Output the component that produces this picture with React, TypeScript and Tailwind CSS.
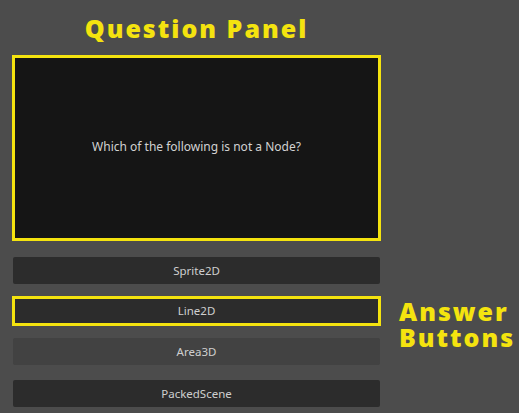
import React from "react";

function Btn({ label, tone }: { label: string; tone: "dark" | "light" }) {
  return (
    <div
      className={`mx-px flex h-[27px] items-center justify-center rounded-[2px] text-[11.5px] text-[#cfcfcf] ${
        tone === "dark" ? "bg-[#2c2c2c]" : "bg-[#424242]"
      }`}
    >
      {label}
    </div>
  );
}

export default function App() {
  return (
    <div
      className="flex h-[413px] w-[519px] bg-[#4c4c4c]"
      style={{ fontFamily: '"Noto Sans", "Open Sans", sans-serif' }}
    >
      <div className="ml-[12px] flex w-[369px] flex-col">
        <div
          className="mt-[16px] h-[25px] text-center text-[25px] font-extrabold leading-[25px] tracking-[2px] text-[#f4e30f]"
          style={{ fontFamily: '"Open Sans", sans-serif' }}
        >
          Question Panel
        </div>
        <div className="mt-[14px] flex h-[186px] items-center justify-center border-[3px] border-[#f4e30f] bg-[#151515] pb-[2px] text-[12px] text-[#d2d2d2]">
          Which of the following is not a Node?
        </div>
        <div className="mt-[16px]">
          <Btn label="Sprite2D" tone="dark" />
        </div>
        <div className="mt-[12px] flex h-[30px] items-center justify-center border-[3px] border-[#f4e30f] bg-[#2c2c2c] text-[11.5px] text-[#cfcfcf]">
          Line2D
        </div>
        <div className="mt-[12px]">
          <Btn label="Area3D" tone="light" />
        </div>
        <div className="mt-[15px]">
          <Btn label="PackedScene" tone="dark" />
        </div>
      </div>
      <div
        className="ml-[18px] flex flex-col pt-[298px] text-[25px] font-extrabold leading-[26px] tracking-[2px] text-[#f4e30f]"
        style={{ fontFamily: '"Open Sans", sans-serif' }}
      >
        <div>Answer</div>
        <div>Buttons</div>
      </div>
    </div>
  );
}
